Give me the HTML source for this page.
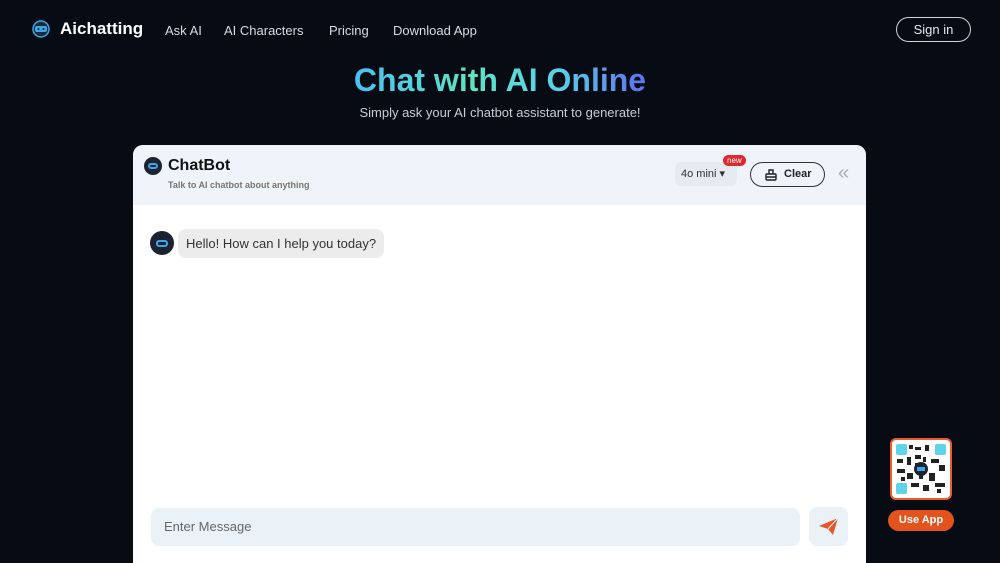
<!DOCTYPE html>
<html><head><meta charset="utf-8"><style>
*{margin:0;padding:0;box-sizing:border-box}
html,body{width:1000px;height:563px;overflow:hidden}
body{background:#070b13;font-family:"Liberation Sans",sans-serif;position:relative;color:#fff}
.nav{position:absolute;top:0;left:0;right:0;height:60px}
.logo{position:absolute;left:30px;top:19px;display:flex;align-items:center;gap:8px;font-weight:bold;font-size:17px}
.links a{position:absolute;top:23px;font-size:13px;color:#d8dce2;text-decoration:none}
.sign{position:absolute;left:896px;top:17px;width:75px;height:25px;border:1px solid #cfd3d8;border-radius:13px;font-size:13px;text-align:center;line-height:23px;color:#e6e8eb}
h1{position:absolute;top:62px;left:0;right:0;text-align:center;font-size:32px;font-weight:bold;}
h1 span{background:linear-gradient(90deg,#4dbff2,#5fe3c3 40%,#5ad0e8 70%,#5e6ff0);-webkit-background-clip:text;background-clip:text;color:transparent}
.sub{position:absolute;top:105px;left:0;right:0;text-align:center;font-size:13px;color:#c9cdd3}
.card{position:absolute;left:133px;top:145px;width:733px;height:418px;background:#fff;border-radius:10px 10px 0 0;overflow:hidden}
.head{height:60px;background:#eef4f9;position:relative}
.av{width:22px;height:22px;border-radius:50%;background:#1c2230;position:absolute;display:flex;align-items:center;justify-content:center}
.av i{width:12px;height:7px;border:2px solid #3aa7e8;border-radius:3px;display:block}
.title{position:absolute;left:35px;top:12px;font-size:16px;font-weight:bold;color:#111}
.tsub{position:absolute;left:35px;top:35px;font-size:9px;font-weight:bold;color:#7a7476}
.model{position:absolute;left:542px;top:17px;width:62px;height:24px;background:#e6ebef;border-radius:6px;font-size:11px;color:#333;line-height:24px;padding-left:6px}
.new{position:absolute;left:590px;top:10px;background:#e0282f;color:#fff;font-size:8px;border-radius:8px;padding:1px 4px}
.clear{position:absolute;left:617px;top:17px;width:75px;height:25px;border:1px solid #333;border-radius:13px;font-size:11px;font-weight:bold;color:#222;line-height:23px;padding-left:33px}
.msg{position:absolute;left:45px;top:84px;background:#ececec;border-radius:8px;padding:0 8px;height:29px;line-height:29px;font-size:13px;color:#333}
.input{position:absolute;left:18px;top:363px;width:649px;height:38px;background:#eaf2f8;border-radius:8px;font-size:13px;color:#666;line-height:38px;padding-left:13px}
.send{position:absolute;left:676px;top:362px;width:39px;height:39px;background:#eaf2f8;border-radius:8px}
.qr{position:absolute;left:890px;top:438px;width:62px;height:62px;border:2px solid #ef5a2a;border-radius:6px;background:#fff;padding:3px}
.use{position:absolute;left:888px;top:510px;width:66px;height:21px;background:#e3531e;border-radius:11px;font-size:11px;font-weight:bold;text-align:center;line-height:21px}
</style></head><body>
<div class="nav">
<div class="logo"><svg width="22" height="18" viewBox="0 0 22 18"><circle cx="11" cy="9" r="8" fill="#1c2a3c" stroke="#3aa7e8" stroke-width="1.5"/><rect x="5" y="6" width="12" height="6" rx="2" fill="#3aa7e8"/><circle cx="8.5" cy="9" r="1" fill="#111"/><circle cx="13.5" cy="9" r="1" fill="#111"/></svg>Aichatting</div>
<div class="links"><a style="left:165px">Ask AI</a><a style="left:224px">AI Characters</a><a style="left:329px">Pricing</a><a style="left:393px">Download App</a></div>
<div class="sign">Sign in</div>
</div>
<h1><span>Chat with AI Online</span></h1>
<div class="sub">Simply ask your AI chatbot assistant to generate!</div>
<div class="card">
<div class="head">
<div class="av" style="left:11px;top:12px;width:18px;height:18px"><i style="width:10px;height:6px"></i></div>
<div class="title">ChatBot</div>
<div class="tsub">Talk to AI chatbot about anything</div>
<div class="model">4o mini ▾</div><div class="new">new</div>
<div class="clear"><svg style="position:absolute;left:13px;top:5px" width="14" height="14" viewBox="0 0 14 14" fill="none" stroke="#222" stroke-width="1.4"><rect x="2" y="6" width="10" height="6" rx="1"/><path d="M5 6V2h4v4M2 9h10"/></svg>Clear</div>
<div style="position:absolute;left:705px;top:17px;color:#aab;font-size:20px">«</div>
</div>
<div class="av" style="left:17px;top:86px;width:24px;height:24px"><i></i></div>
<div class="msg">Hello! How can I help you today?</div>
<div class="input">Enter Message</div>
<div class="send"><svg style="position:absolute;left:10px;top:11px" width="19" height="17" viewBox="0 0 19 17"><path d="M0 8L19 0 14 17 9 11z" fill="#e8562a"/><path d="M9 11l10-11" stroke="#fff" stroke-width="1"/></svg></div>
</div>
<div class="qr"><svg width="52" height="52" viewBox="0 0 52 52"><rect width="52" height="52" fill="#fff"/><g fill="#222"><rect x="14" y="2" width="4" height="4"/><rect x="20" y="4" width="6" height="3"/><rect x="30" y="2" width="4" height="6"/><rect x="2" y="16" width="6" height="4"/><rect x="12" y="14" width="4" height="8"/><rect x="36" y="16" width="8" height="4"/><rect x="44" y="22" width="6" height="6"/><rect x="2" y="26" width="8" height="4"/><rect x="12" y="30" width="6" height="6"/><rect x="34" y="30" width="6" height="8"/><rect x="16" y="40" width="8" height="4"/><rect x="28" y="42" width="6" height="6"/><rect x="40" y="40" width="10" height="4"/><rect x="20" y="12" width="6" height="4"/><rect x="42" y="46" width="4" height="4"/><rect x="20" y="20" width="4" height="3"/><rect x="28" y="14" width="3" height="5"/><rect x="6" y="34" width="4" height="4"/><rect x="24" y="32" width="4" height="4"/></g><g fill="#5fd3e8"><rect x="1" y="1" width="11" height="11" rx="2"/><rect x="40" y="1" width="11" height="11" rx="2"/><rect x="1" y="40" width="11" height="11" rx="2"/></g><circle cx="26" cy="26" r="7" fill="#1c2230"/><rect x="22" y="24" width="8" height="4" fill="#3aa7e8"/></svg></div>
<div class="use">Use App</div>
</body></html>
